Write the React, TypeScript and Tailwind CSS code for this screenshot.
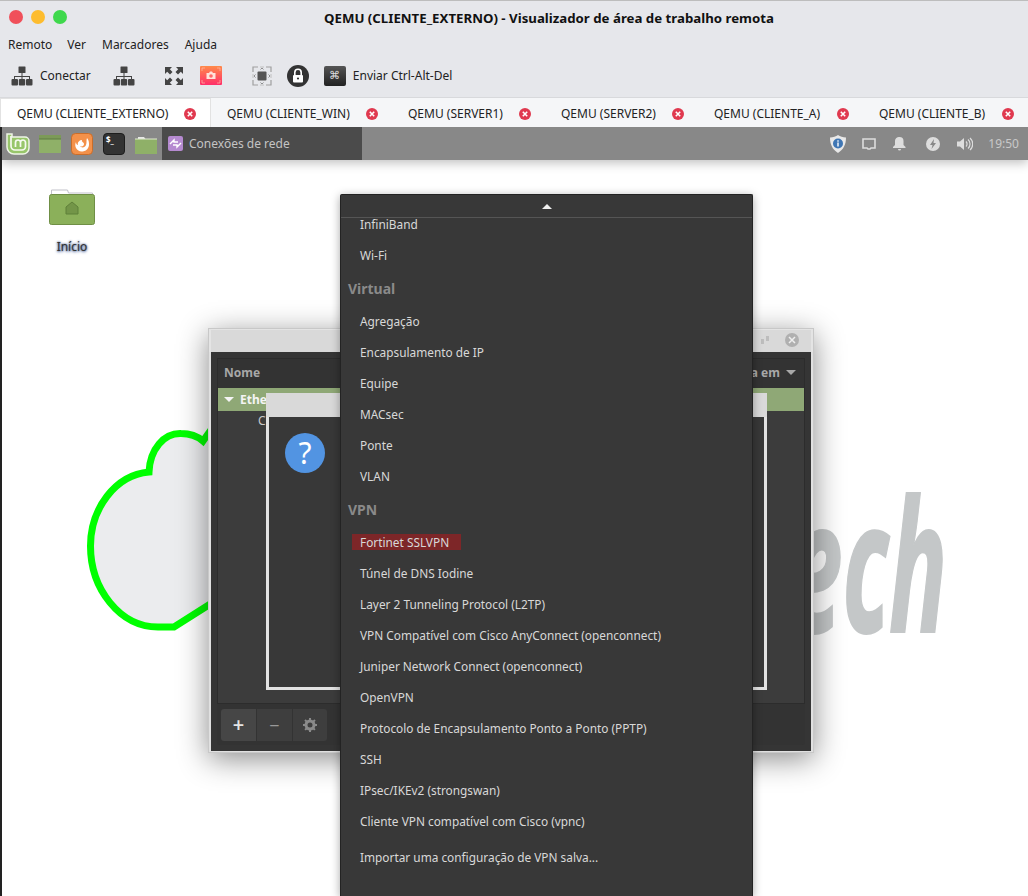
const font = { fontFamily: '"Noto Sans", sans-serif' };

const tabs = [
  { label: "QEMU (CLIENTE_EXTERNO)", w: "w-[211px]", active: true },
  { label: "QEMU (CLIENTE_WIN)", w: "w-[181px]" },
  { label: "QEMU (SERVER1)", w: "w-[153px]" },
  { label: "QEMU (SERVER2)", w: "w-[153px]" },
  { label: "QEMU (CLIENTE_A)", w: "w-[165px]" },
  { label: "QEMU (CLIENTE_B)", w: "w-[165px]" },
];

const virtualItems = ["Agregação", "Encapsulamento de IP", "Equipe", "MACsec", "Ponte", "VLAN"];
const vpnItems = [
  "Túnel de DNS Iodine",
  "Layer 2 Tunneling Protocol (L2TP)",
  "VPN Compatível com Cisco AnyConnect (openconnect)",
  "Juniper Network Connect (openconnect)",
  "OpenVPN",
  "Protocolo de Encapsulamento Ponto a Ponto (PPTP)",
  "SSH",
  "IPsec/IKEv2 (strongswan)",
  "Cliente VPN compatível com Cisco (vpnc)",
];

const NetworkIcon = () => (
  <svg width="22" height="20" viewBox="0 0 22 20" fill="#444">
    <rect x="7.500" y="0.500" width="7" height="6.500" rx="0.500" />
    <rect x="0.500" y="13" width="6.500" height="6.500" rx="1" />
    <rect x="7.800" y="13" width="6.400" height="6.500" rx="1" />
    <rect x="15" y="13" width="6.500" height="6.500" rx="1" />
    <path d="M10.500 7h1v3h7.500v3h-1v-2h-6.500v2h-1v-2H4v2H3v-3h7.500z" />
  </svg>
);

const CloseDot = () => (
  <svg width="12" height="12" viewBox="0 0 12 12" className="shrink-0">
    <circle cx="6" cy="6" r="6" fill="#e0394f" />
    <path d="M3.800 3.800l4.400 4.400M8.200 3.800l-4.400 4.400" stroke="#fff" strokeWidth="1.600" />
  </svg>
);

const MenuItem = ({ label }: { label: string }) => (
  <div className="flex h-[31px] items-center pl-[19px] text-[11.85px] text-[#d8d8d8]">{label}</div>
);

const MenuHeading = ({ label }: { label: string }) => (
  <div className="flex h-[35px] items-center pl-[7px] text-[14px] font-bold text-[#8a8a8a]">{label}</div>
);

export default function App() {
  return (
    <div className="flex h-[896px] w-[1028px] flex-col overflow-hidden bg-white" style={font}>
      {/* mac window chrome */}
      <div className="flex h-[97px] flex-col border-t border-[#bdbdbd] bg-[#e6e7eb]">
        <div className="relative flex h-[30px] shrink-0 items-center justify-center pl-[70px] pt-[5px] text-[13.25px] font-bold text-[#111]">
          <div className="absolute left-[9px] top-[9px] flex gap-2">
            <span className="h-[14px] w-[14px] rounded-full bg-[#f0505a]" />
            <span className="h-[14px] w-[14px] rounded-full bg-[#fdbc2e]" />
            <span className="h-[14px] w-[14px] rounded-full bg-[#3fd84c]" />
          </div>
          QEMU (CLIENTE_EXTERNO) - Visualizador de área de trabalho remota
        </div>
        <div className="flex h-[28px] shrink-0 items-center gap-[15px] pl-2 text-[12px] text-[#222]">
          <span>Remoto</span>
          <span>Ver</span>
          <span className="ml-px">Marcadores</span>
          <span className="ml-px">Ajuda</span>
        </div>
        <div className="flex flex-1 items-center pb-[5px] pl-[11px] text-[12px] text-[#222]">
          <NetworkIcon />
          <span className="ml-[7px]">Conectar</span>
          <span className="ml-[22px]">
            <NetworkIcon />
          </span>
          <svg width="20" height="20" viewBox="0 0 20 20" className="ml-[29px]" fill="#444">
            <path d="M1 1h7L5.800 3.200 8.500 6 6 8.500 3.200 5.800 1 8zM19 1v7l-2.200-2.200L14 8.500 11.500 6l2.700-2.800L12 1zM1 19v-7l2.200 2.200L6 11.500 8.500 14l-2.700 2.800L8 19zM19 19h-7l2.200-2.200L11.500 14l2.500-2.500 2.800 2.700L19 12z" />
          </svg>
          <svg width="22" height="19" viewBox="0 0 22 19" className="ml-[16px]">
            <defs>
              <linearGradient id="cam" x1="0" y1="0" x2="0" y2="1">
                <stop offset="0" stopColor="#ff8a4a" />
                <stop offset="1" stopColor="#ff2f6a" />
              </linearGradient>
            </defs>
            <rect width="22" height="19" rx="1" fill="url(#cam)" />
            <path d="M2 5V2h3M17 2h3v3M2 14v3h3M17 17h3v-3" fill="none" stroke="#ffb9a8" strokeWidth="0.700" />
            <path d="M6.500 7h2.500l1-1.500h2l1 1.500h2.500v6h-9z" fill="#ffe3da" />
            <circle cx="11" cy="10" r="1.800" fill="#ff6a6a" />
          </svg>
          <svg width="20" height="20" viewBox="0 0 20 20" className="ml-[30px]">
            <path d="M1 6V1h5M14 1h5v5M1 14v5h5M14 19h5v-5" fill="none" stroke="#a0a0a0" strokeWidth="1.200" />
            <path d="M8 1h4M8 19h4M1 8v4M19 8v4" stroke="#c0c0c0" strokeWidth="1" />
            <rect x="5.500" y="5.500" width="9" height="9" rx="1" fill="#555" />
            <path d="M8.500 3.500L10 2l1.500 1.500M8.500 16.500L10 18l1.500-1.500M3.500 8.500L2 10l1.500 1.500M16.500 8.500L18 10l-1.500 1.500" fill="none" stroke="#777" strokeWidth="0.800" />
          </svg>
          <svg width="22" height="22" viewBox="0 0 22 22" className="ml-[15px]">
            <circle cx="11" cy="11" r="11" fill="#333" />
            <path d="M7.800 10V7.500a3.200 3.200 0 0 1 6.400 0V10" fill="none" stroke="#fff" strokeWidth="1.600" />
            <rect x="6" y="10" width="10" height="7.500" rx="1" fill="#fff" />
            <circle cx="11" cy="13.500" r="1.100" fill="#333" />
          </svg>
          <span className="ml-[15px] flex h-[20px] w-[22px] items-center justify-center rounded-[2px] bg-gradient-to-b from-[#555] to-[#222] text-[11px] text-[#ddd]">
            ⌘
          </span>
          <span className="ml-[7px]">Enviar Ctrl-Alt-Del</span>
        </div>
      </div>

      {/* tabs */}
      <div className="flex h-[30px] shrink-0 border-t border-[#d8d9dc] bg-[#f5f6f8] text-[12px] text-[#222]">
        {tabs.map((t) => (
          <div
            key={t.label}
            className={`flex items-center justify-between pl-[16px] pr-[14px] pt-[2px] ${t.w} ${t.active ? "border-x border-t border-[#e2e2e2] bg-white" : ""}`}
          >
            <span>{t.label}</span>
            <CloseDot />
          </div>
        ))}
      </div>

      {/* remote desktop */}
      <div className="relative flex-1 overflow-hidden border-l-2 border-[#222] bg-white">
        <div className="relative z-10 flex h-[33px] items-center bg-[#888888] shadow-[0_3px_10px_rgba(0,0,0,0.25)]">
          <svg width="24" height="22" viewBox="0 0 24 22" className="ml-[4px]">
            <path d="M1 1h5v3h13a4 4 0 0 1 4 4v7a6 6 0 0 1-6 6H8a7 7 0 0 1-7-7z" fill="#98c66b" stroke="#eef5e6" strokeWidth="1.500" />
            <path d="M5 3v10a4 4 0 0 0 4 4h7a3.500 3.500 0 0 0 3.500-3.500V9.500a2.500 2.500 0 0 0-5 0V14M14.500 9.500a2.500 2.500 0 0 0-5 0V14" fill="none" stroke="#f6faf0" strokeWidth="1.700" />
          </svg>
          <svg width="22" height="20" viewBox="0 0 22 20" className="ml-[9px]">
            <rect y="1" width="22" height="18" fill="#8fb068" />
            <rect y="1" width="22" height="4" fill="#7c9a58" />
            <rect y="4.500" width="22" height="1" fill="#5f7a42" />
          </svg>
          <svg width="22" height="22" viewBox="0 0 22 22" className="ml-[10px]">
            <rect x="0.500" y="0.500" width="21" height="21" rx="4" fill="#f3914a" stroke="#c96d2a" />
            <path d="M16 5c2 2 2 5 2 7a7 7 0 0 1-13 3c-1-2-1-4 0-6 0 2 1 3 2 3-1-3 2-5 4-5-1 2 2 2 2 4 0 2-2 3-4 2 1 2 5 2 6-1 1-2 0-5 1-7z" fill="#fff" />
          </svg>
          <span className="ml-[10px] flex h-[22px] w-[22px] items-start rounded-[4px] border border-[#1d1d1d] bg-[#333] pl-[2px] text-[8px] font-bold leading-[12px] text-white">
            $_
          </span>
          <svg width="22" height="20" viewBox="0 0 22 20" className="ml-[10px]">
            <path d="M3 3h6l1.500 2H3z" fill="#e8e8e8" />
            <rect y="5" width="22" height="15" fill="#8fb068" />
            <rect y="4.500" width="22" height="1" fill="#dfe8d0" />
          </svg>
          <div className="ml-[5px] flex h-[33px] w-[200px] items-center gap-[6px] bg-[#4b4b4b] pl-[6px] text-[12px] text-[#c4c4c4]">
            <svg width="15" height="15" viewBox="0 0 15 15">
              <rect width="15" height="15" rx="2" fill="#b58ad0" />
              <path d="M2 8l4-4v2h4M13 7l-4 4V9H5" fill="none" stroke="#fff" strokeWidth="1.400" />
            </svg>
            Conexões de rede
          </div>
          <div className="ml-auto flex items-center pr-[8px] text-[12px] text-[#c9c9c9]">
            <svg width="18" height="20" viewBox="0 0 18 20">
              <path d="M9 1c2 1.500 5 2.500 8 2.500 0 7-2.500 12-8 15.500C3.500 15.500 1 10.500 1 3.500 4 3.500 7 2.500 9 1z" fill="#e8e8e8" />
              <circle cx="9" cy="9.500" r="5" fill="#3f76b4" />
              <rect x="8.300" y="8.500" width="1.400" height="4" fill="#fff" />
              <rect x="8.300" y="6.300" width="1.400" height="1.400" fill="#fff" />
            </svg>
            <svg width="14" height="12" viewBox="0 0 14 12" className="ml-[15px]">
              <path d="M1 1h12v9H9l-1 1H6l-1-1H1z" fill="none" stroke="#ddd" strokeWidth="1.600" />
            </svg>
            <svg width="13" height="15" viewBox="0 0 13 15" className="ml-[17px]">
              <path d="M6.500 1a4 4 0 0 1 4 4v4l2 2v1H0v-1l2-2V5a4 4 0 0 1 4.500-4zM5 13h3a1.500 1.500 0 0 1-3 0z" fill="#ddd" />
            </svg>
            <svg width="14" height="14" viewBox="0 0 14 14" className="ml-[20px]">
              <circle cx="7" cy="7" r="7" fill="#ddd" />
              <path d="M8 2L4 8h2.500L5.500 12 10 6H7.500z" fill="#888" />
            </svg>
            <svg width="16" height="14" viewBox="0 0 16 14" className="ml-[17px]">
              <path d="M0 4.500h3L7 1v12L3 9.500H0z" fill="#ddd" />
              <path d="M9 4.500a3.500 3.500 0 0 1 0 5M11 2.500a6 6 0 0 1 0 9M13 1a8 8 0 0 1 0 12" fill="none" stroke="#ddd" strokeWidth="1.200" />
            </svg>
            <span className="ml-[15px] pr-px">19:50</span>
          </div>
        </div>

        {/* desktop icon */}
        <div className="absolute left-[47px] top-[60px] flex w-[46px] flex-col items-center">
          <svg width="46" height="38" viewBox="0 0 46 38">
            <path d="M2.500 8V3h16l1 3h24v3" fill="#fff" stroke="#c0c0c8" />
            <rect x="0.500" y="7.500" width="45" height="30" rx="2" fill="#8bb05a" stroke="#6f8f45" />
            <path d="M23 15l6 5v7H17v-7z" fill="#739548" stroke="#5f8039" />
          </svg>
          <span className="mt-[13px] text-[12px] text-[#333] [text-shadow:0_0_2px_#3a4f80,0_1px_3px_#4a66a0]">Início</span>
        </div>

        {/* wallpaper logo */}
        <svg width="240" height="220" viewBox="85 425 240 220" className="absolute left-[83px] top-[297px]">
          <path
            d="M213 428L203 442C196 436 188 434.500 181 434.500C164 434 150 450 149 473C115 476 90.500 510 90.500 547C90.500 590 120 628 158 628L174 628L215 602V442Z"
            fill="#ebecee"
            stroke="#00ff00"
            strokeWidth="7"
          />
        </svg>
        <svg width="190" height="260" viewBox="0 0 190 260" className="absolute left-[778px] top-[305px]">
          <text
            x="9"
            y="200"
            textLength="158"
            lengthAdjust="spacingAndGlyphs"
            fontFamily='"Open Sans", sans-serif'
            fontStyle="italic"
            fontWeight="700"
            fontSize="184"
            fill="#c4c7c8"
            stroke="#c4c7c8"
            strokeWidth="2"
          >
            ech
          </text>
        </svg>

        {/* network connections window */}
        <div className="absolute left-[206px] top-[201px] flex h-[425px] w-[606px] flex-col border border-[#c8c8c8] bg-[#353535] shadow-[0_6px_28px_rgba(0,0,0,0.45)]">
          <div className="relative h-[23px] shrink-0 border-x-2 border-t border-[#e4e4e4] bg-[#d9d9d9]">
            <span className="absolute right-[12px] top-[3px] flex h-[14px] w-[14px] items-center justify-center rounded-full bg-[#b0b0b0]">
              <svg width="8" height="8" viewBox="0 0 8 8">
                <path d="M1 1l6 6M7 1l-6 6" stroke="#eee" strokeWidth="1.500" />
              </svg>
            </span>
            <svg width="8" height="8" viewBox="0 0 8 8" className="absolute right-[42px] top-[6px]">
              <path d="M0 8V3l3 0 0 5zM8 0v5H5V0z" fill="#bdbdbd" />
            </svg>
          </div>
          <div className="flex flex-1 flex-col border-x-2 border-b border-[#e0e0e0] p-[6px]">
            <div className="flex flex-1 flex-col border border-b-0 border-[#2c2c2c] bg-[#3c3c3c]">
              <div className="flex h-[29px] shrink-0 items-center justify-between bg-[#333] px-[6px] pb-[2px] text-[12px] font-bold text-[#a8a8a8]">
                <span>Nome</span>
                <span className="flex items-center gap-[6px] pr-[2px]">
                  a em
                  <span className="h-0 w-0 border-x-[5px] border-t-[5px] border-x-transparent border-t-[#a8a8a8]" />
                </span>
              </div>
              <div className="flex h-[23px] shrink-0 items-center gap-[6px] bg-[#8fa876] pl-[6px] text-[12px] font-bold text-[#f4f4f4]">
                <span className="h-0 w-0 border-x-[5px] border-t-[5px] border-x-transparent border-t-[#f4f4f4]" />
                Ethe
              </div>
              <div className="pl-[40px] pt-[1px] text-[12px] text-[#c8c8c8]">C</div>
            </div>
            <div className="flex h-[42px] shrink-0 items-end rounded-b-[3px] border-t border-[#2c2c2c] bg-[#333] pb-[4px] pl-[4px]">
              <div className="flex h-[32px] overflow-hidden rounded-[3px]">
                <span className="flex w-[35px] items-center justify-center bg-[#464646] text-[20px] font-semibold text-[#e4e4e4]">+</span>
                <span className="ml-px flex w-[35px] items-center justify-center bg-[#3e3e3e] text-[18px] text-[#999]">−</span>
                <span className="ml-px flex w-[34px] items-center justify-center bg-[#3e3e3e]">
                  <svg width="14" height="14" viewBox="0 0 14 14">
                    <circle cx="7" cy="7" r="4" fill="none" stroke="#8a8a8a" strokeWidth="3" />
                    <path d="M7 0v14M0 7h14M2 2l10 10M12 2L2 12" stroke="#8a8a8a" strokeWidth="2" strokeDasharray="2 10" />
                  </svg>
                </span>
              </div>
            </div>
          </div>
        </div>

        {/* question dialog */}
        <div className="absolute left-[264px] top-[266px] flex h-[297px] w-[501px] flex-col border-x-[3px] border-b-[3px] border-[#e2e2e2] bg-[#383838]">
          <div className="-mx-[3px] h-[24px] shrink-0 bg-[#d9d9d9]" />
          <div className="pl-[16px] pt-[16px]">
            <span className="flex h-[40px] w-[40px] items-center justify-center rounded-full bg-[#5294e2] text-[30px] leading-none text-white">?</span>
          </div>
        </div>

        {/* connection type menu */}
        <div className="absolute bottom-0 left-[338px] top-[67px] flex w-[413px] flex-col overflow-hidden rounded-t-[2px] border border-b-0 border-[#232323] bg-[#383838] shadow-[0_2px_10px_rgba(0,0,0,0.35)]">
          <div className="flex h-[23px] shrink-0 items-center justify-center border-b border-[#555]">
            <span className="h-0 w-0 border-x-[5px] border-b-[5px] border-x-transparent border-b-[#eee]" />
          </div>
          <div className="-mt-[9px] flex flex-col">
            <MenuItem label="InfiniBand" />
            <MenuItem label="Wi-Fi" />
            <MenuHeading label="Virtual" />
            {virtualItems.map((item) => (
              <MenuItem key={item} label={item} />
            ))}
            <MenuHeading label="VPN" />
            <div className="flex h-[31px] items-center pb-[2px] pl-[11px] text-[11.85px] text-[#d8d8d8]">
              <span className="bg-[#7d2628] pl-[8px] pr-[12px] leading-[16px]">Fortinet SSLVPN</span>
            </div>
            {vpnItems.map((item) => (
              <MenuItem key={item} label={item} />
            ))}
            <div className="mt-[5px]">
              <MenuItem label="Importar uma configuração de VPN salva..." />
            </div>
          </div>
        </div>
      </div>
    </div>
  );
}
